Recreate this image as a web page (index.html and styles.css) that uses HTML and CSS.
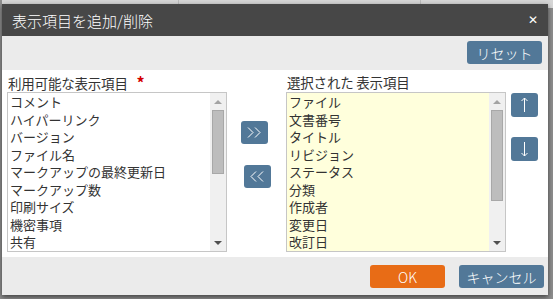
FILE: index.html
```html
<!DOCTYPE html>
<html lang="ja">
<head>
  <meta charset="UTF-8">
  <title>表示項目を追加/削除</title>
  <link rel="stylesheet" href="styles.css">
</head>
<body>

  <div class="page-head"></div>

  <div class="dialog">
    <div class="dialog-title">
      <span>表示項目を追加/削除</span>
      <span class="close">&#x2715;</span>
    </div>

    <div class="dialog-toolbar">
      <button class="btn btn-reset">リセット</button>
    </div>

    <div class="dialog-body">
      <div class="column">
        <div class="field-label">利用可能な表示項目 <span class="required">*</span></div>
        <div class="listbox">
          <ul class="items">
            <li>コメント</li>
            <li>ハイパーリンク</li>
            <li>バージョン</li>
            <li>ファイル名</li>
            <li>マークアップの最終更新日</li>
            <li>マークアップ数</li>
            <li>印刷サイズ</li>
            <li>機密事項</li>
            <li>共有</li>
          </ul>
          <div class="scrollbar">
            <span class="arrow arrow-up"></span>
            <div class="track"><div class="thumb thumb-left"></div></div>
            <span class="arrow arrow-down"></span>
          </div>
        </div>
      </div>

      <div class="move-buttons">
        <button class="btn btn-icon">
          <svg width="15" height="11" viewBox="0 0 15 11"><polyline points="1,0.5 6,5.5 1,10.5" /><polyline points="8,0.5 13,5.5 8,10.5" /></svg>
        </button>
        <button class="btn btn-icon btn-back">
          <svg width="15" height="11" viewBox="0 0 15 11"><polyline points="6,0.5 1,5.5 6,10.5" /><polyline points="13,0.5 8,5.5 13,10.5" /></svg>
        </button>
      </div>

      <div class="column">
        <div class="field-label">選択された 表示項目</div>
        <div class="listbox listbox-selected">
          <ul class="items">
            <li>ファイル</li>
            <li>文書番号</li>
            <li>タイトル</li>
            <li>リビジョン</li>
            <li>ステータス</li>
            <li>分類</li>
            <li>作成者</li>
            <li>変更日</li>
            <li>改訂日</li>
          </ul>
          <div class="scrollbar">
            <span class="arrow arrow-up"></span>
            <div class="track"><div class="thumb thumb-right"></div></div>
            <span class="arrow arrow-down"></span>
          </div>
        </div>
      </div>

      <div class="order-buttons">
        <button class="btn btn-order">
          <svg width="9" height="16" viewBox="0 0 9 16"><line x1="4.5" y1="1" x2="4.5" y2="15" /><polyline points="1.5,4 4.5,1 7.5,4" /></svg>
        </button>
        <button class="btn btn-order">
          <svg width="9" height="16" viewBox="0 0 9 16"><line x1="4.5" y1="1" x2="4.5" y2="15" /><polyline points="1.5,12 4.5,15 7.5,12" /></svg>
        </button>
      </div>
    </div>

    <div class="dialog-footer">
      <button class="btn btn-ok">OK</button>
      <button class="btn btn-cancel">キャンセル</button>
    </div>
  </div>

</body>
</html>
```

FILE: styles.css
```css
body {
  margin: 0;
  width: 553px;
  height: 299px;
  background-color: #8e8e8e;
  font-family: "Noto Sans CJK JP", "DejaVu Sans", sans-serif;
  overflow: hidden;
}

/* page table header peeking out behind the dialog */
.page-head {
  height: 8px;
  margin-left: 2px;
  background: linear-gradient(to right, #d6d6d6 0, #d6d6d6 176px, #bbb 176px, #bbb 177px, #d6d6d6 177px, #d6d6d6 418px, #bbb 418px, #bbb 419px, #d6d6d6 419px);
}

.dialog {
  position: absolute;
  left: 2px;
  top: 4px;
  width: 546px;
  height: 291px;
  display: flex;
  flex-direction: column;
  background-color: #ebebeb;
  box-shadow: 0 2px 5px rgba(0, 0, 0, 0.55);
}

.dialog-title {
  height: 32px;
  flex-shrink: 0;
  background-color: #474747;
  color: #fff;
  display: flex;
  align-items: center;
  justify-content: space-between;
  padding: 0 10px 0 10px;
  font-size: 15px;
  font-weight: 300;
}

.close {
  font-size: 12px;
  font-weight: bold;
  font-family: "DejaVu Sans", sans-serif;
}

.btn {
  border: none;
  border-radius: 3px;
  background-color: #527898;
  color: #fff;
  font-family: inherit;
  font-size: 14px;
  font-weight: 300;
  padding: 0;
  cursor: pointer;
  display: flex;
  align-items: center;
  justify-content: center;
}

.dialog-toolbar {
  height: 34px;
  flex-shrink: 0;
  display: flex;
  justify-content: flex-end;
  align-items: flex-start;
  padding: 5px 6px 0 0;
  box-sizing: border-box;
}

.btn-reset {
  width: 75px;
  height: 23px;
}

.dialog-body {
  height: 187px;
  flex-shrink: 0;
  background-color: #fff;
  display: flex;
  padding: 4px 0 0 5px;
  box-sizing: border-box;
}

.column {
  width: 220px;
  display: flex;
  flex-direction: column;
}

.field-label {
  height: 18px;
  font-size: 13.5px;
  line-height: 17px;
  color: #333;
  padding-left: 1px;
  letter-spacing: -0.2px;
}

.required {
  color: #d40000;
  font-size: 16px;
  font-weight: bold;
  margin-left: 6px;
}

.listbox {
  height: 160px;
  border: 1px solid #c6c6c6;
  box-sizing: border-box;
  display: flex;
  background-color: #fff;
}

.listbox-selected {
  background-color: #ffffdc;
}

.items {
  list-style: none;
  margin: 0;
  padding: 0 0 0 2px;
  flex: 1;
  overflow: hidden;
  font-size: 13px;
  line-height: 17.5px;
  color: #333;
}

.items li {
  white-space: nowrap;
}

.scrollbar {
  width: 16px;
  background-color: #f0f0f0;
  display: flex;
  flex-direction: column;
  align-items: center;
}

.arrow {
  height: 17px;
  flex-shrink: 0;
  display: flex;
  align-items: center;
  justify-content: center;
}

.arrow::after {
  content: "";
  border-left: 4px solid transparent;
  border-right: 4px solid transparent;
}

.arrow-up::after {
  border-bottom: 4px solid #a3a3a3;
}

.arrow-down::after {
  border-top: 4px solid #505050;
}

.track {
  flex: 1;
  width: 100%;
}

.thumb {
  margin: 0 2px;
  background-color: #bdbdbd;
  border: 1px solid #a8a8a8;
  box-sizing: border-box;
}

.thumb-left {
  height: 64px;
}

.thumb-right {
  height: 91px;
}

.move-buttons {
  width: 59px;
  display: flex;
  flex-direction: column;
  align-items: flex-start;
  padding: 47px 0 0 14px;
  box-sizing: border-box;
  gap: 21px;
}

.btn-icon {
  width: 27px;
  height: 23px;
}

.btn-back {
  margin-left: 3px;
}

.btn svg {
  fill: none;
  stroke: #fff;
  stroke-width: 1;
}

.order-buttons {
  display: flex;
  flex-direction: column;
  padding: 19px 0 0 5px;
  gap: 20px;
}

.btn-order {
  width: 27px;
  height: 24px;
}

.dialog-footer {
  flex: 1;
  display: flex;
  justify-content: flex-end;
  align-items: flex-start;
  gap: 14px;
  padding: 8px 4px 0 0;
}

.btn-ok {
  width: 75px;
  height: 23px;
  background-color: #e86c16;
}

.btn-cancel {
  width: 85px;
  height: 23px;
}
```
